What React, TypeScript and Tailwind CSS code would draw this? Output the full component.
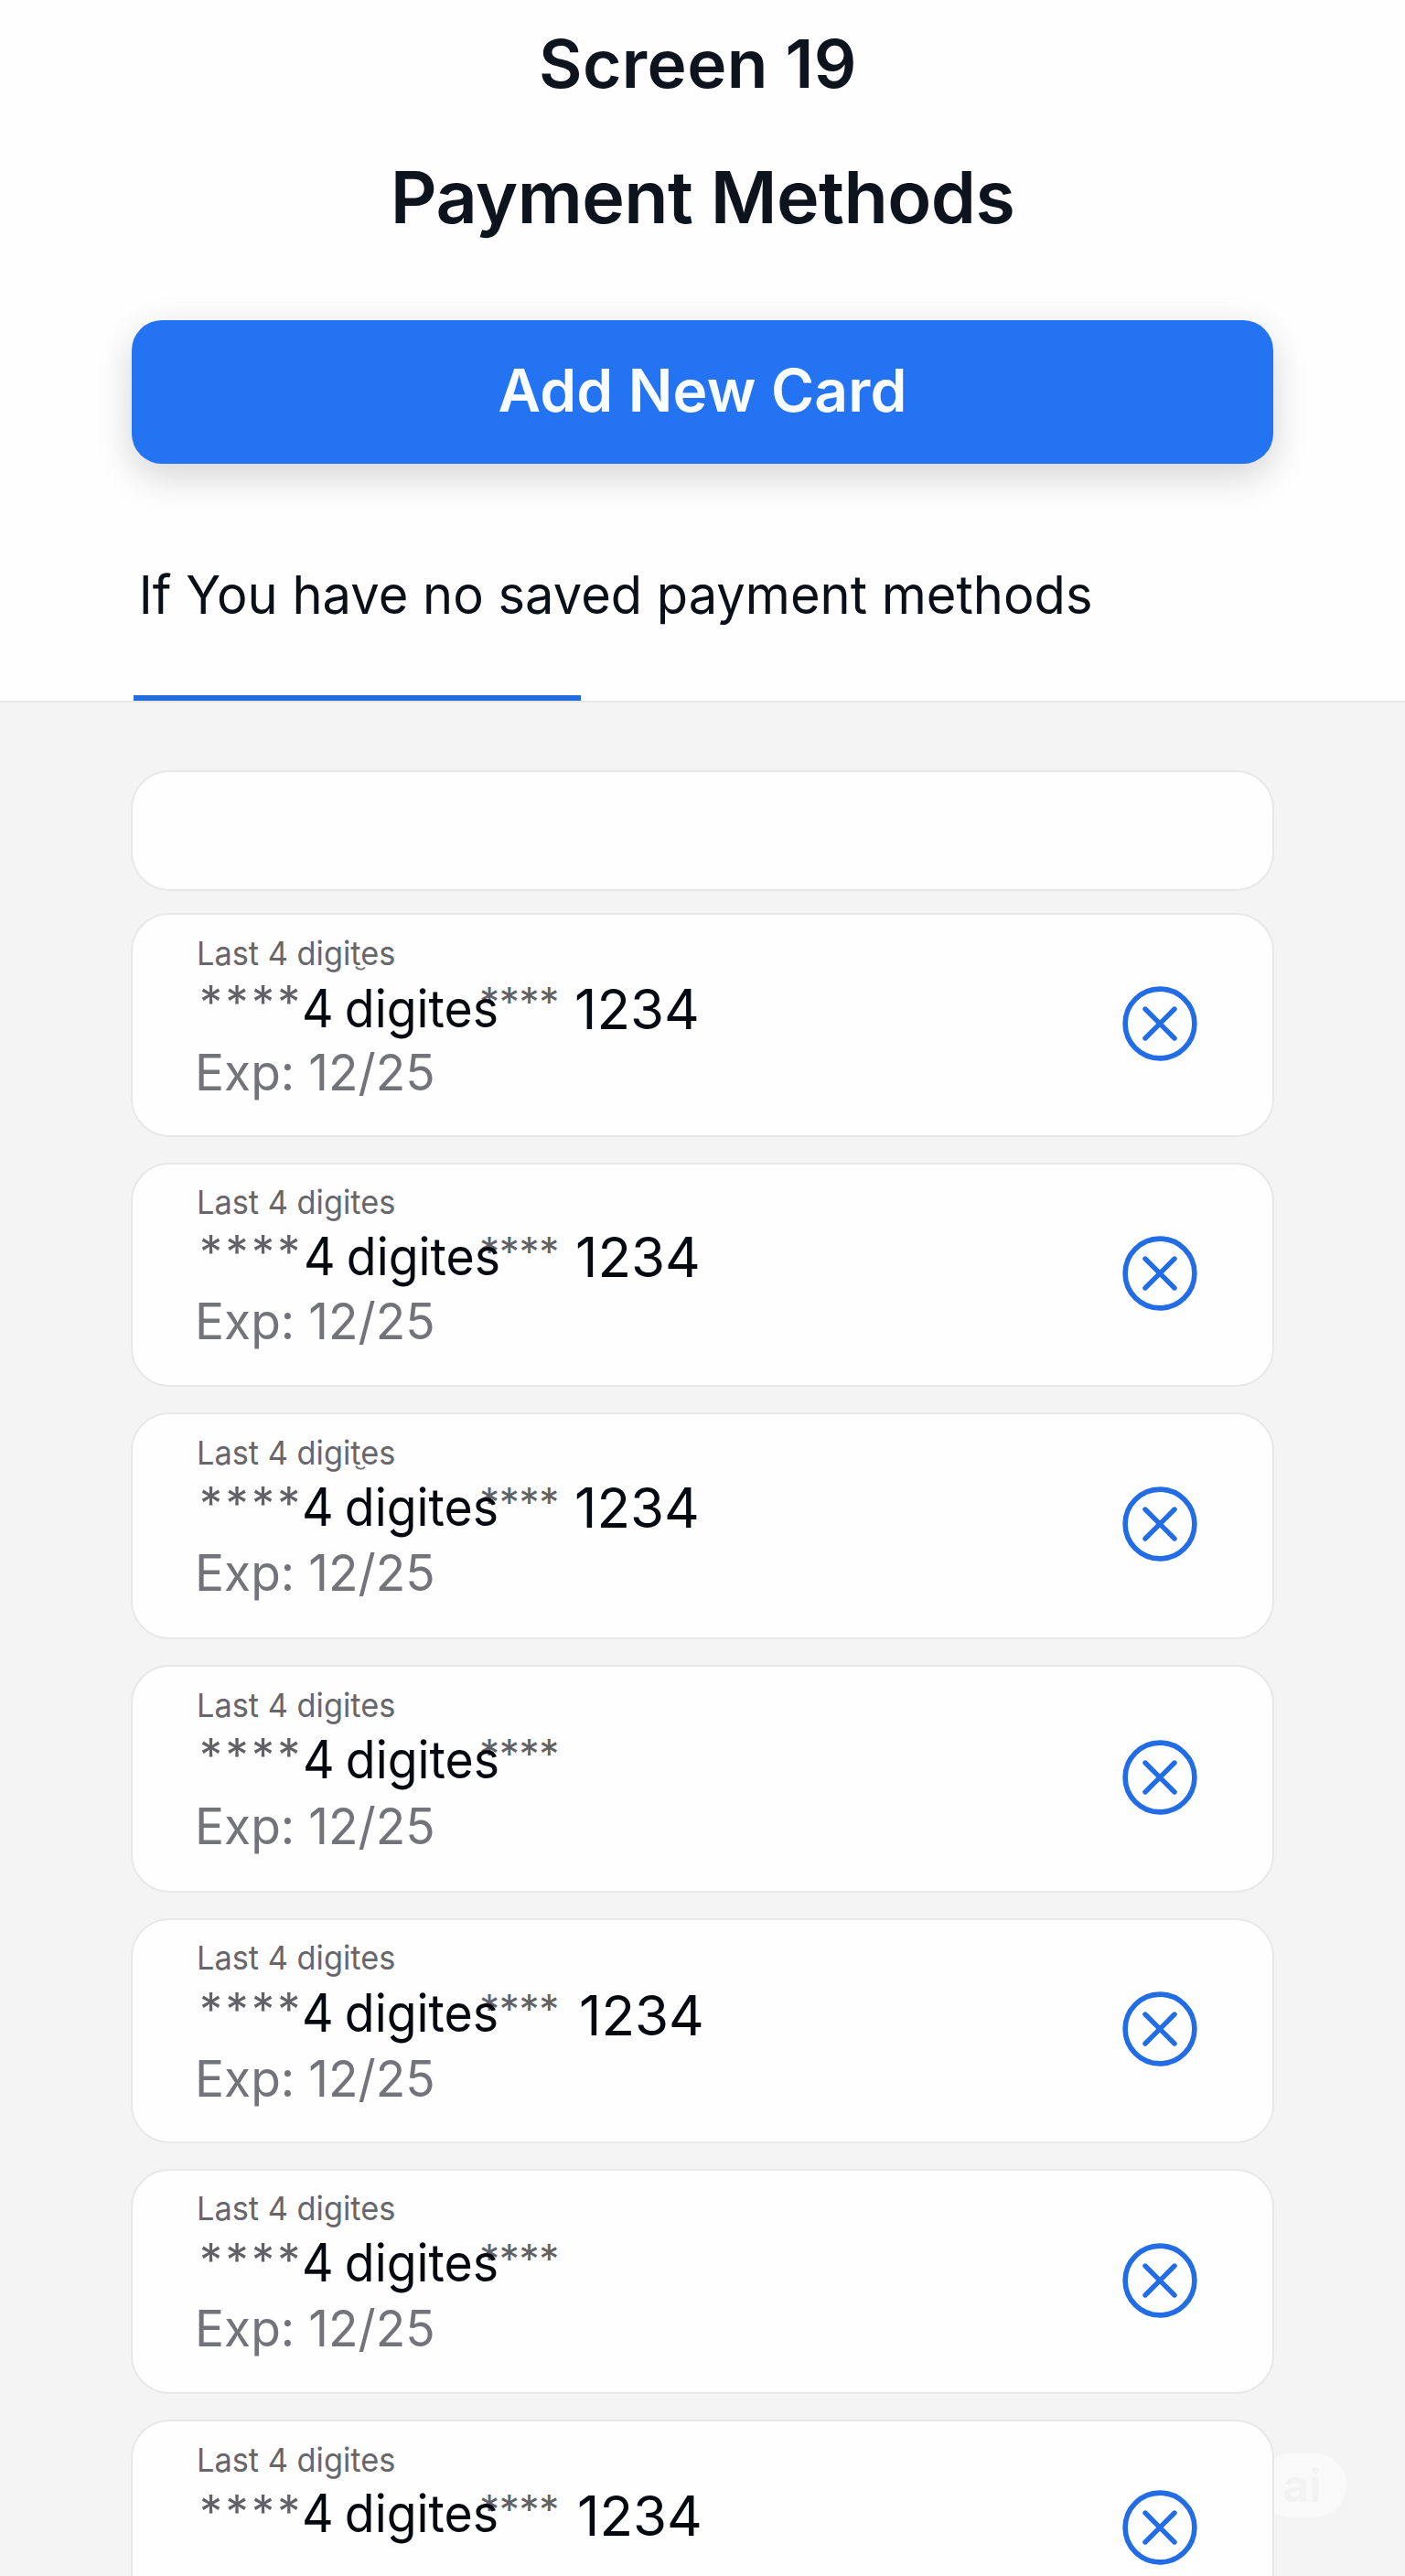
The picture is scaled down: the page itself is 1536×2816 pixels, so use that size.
type SavedCard = {
  card: string;
  label: string;
  row: string;
  mask: string;
  digits: string;
  tail: string;
  number?: string;
  expiry?: string;
  icon: string;
  mark?: boolean;
};

const CARDS: SavedCard[] = [
  { card: "h-[245px]", label: "mt-[22px]", row: "mt-[8px]", mask: "mt-[2px]", digits: "ml-[112px]", tail: "mt-[1px]", number: "mt-[9px] ml-[410px]", expiry: "mt-[20px]", icon: "mt-[78px]", mark: true },
  { card: "h-[245px]", label: "mt-[21px]", row: "mt-[7px]", mask: "mt-[4px]", digits: "ml-[114px]", tail: "mt-[3px]", number: "mt-[9px] ml-[411px]", expiry: "mt-[21px]", icon: "mt-[78px]" },
  { card: "h-[248px]", label: "mt-[22px]", row: "mt-[7px]", mask: "mt-[5px]", digits: "ml-[112px]", tail: "mt-[3px]", number: "mt-[9px] ml-[410px]", expiry: "mt-[22px]", icon: "mt-[79px]", mark: true },
  { card: "h-[249px]", label: "mt-[22px]", row: "mt-[7px]", mask: "mt-[4px]", digits: "ml-[113px]", tail: "mt-[2px]", expiry: "mt-[23px]", icon: "mt-[80px]" },
  { card: "h-[246px]", label: "mt-[21px]", row: "mt-[8px]", mask: "mt-[5px]", digits: "ml-[112px]", tail: "mt-[4px]", number: "mt-[11px] ml-[415px]", expiry: "mt-[22px]", icon: "mt-[78px]" },
  { card: "h-[246px]", label: "mt-[21px]", row: "mt-[7px]", mask: "mt-[6px]", digits: "ml-[112px]", tail: "mt-[4px]", expiry: "mt-[22px]", icon: "mt-[79px]" },
  { card: "h-[246px]", label: "mt-[22px]", row: "mt-[6px]", mask: "mt-[7px]", digits: "ml-[112px]", tail: "mt-[4px]", number: "mt-[11px] ml-[413px]", icon: "mt-[75px]" },
];

function RemoveIcon() {
  return (
    <svg viewBox="0 0 82 82" className="size-[82px]" fill="none" stroke="#226de6" strokeLinecap="round">
      <circle cx="41" cy="41" r="37.9" strokeWidth="5.6" />
      <path d="M25 25 57 57M57 25 25 57" strokeWidth="5.4" />
    </svg>
  );
}

function CardRow({ item }: { item: SavedCard }) {
  return (
    <li className={`flex shrink-0 items-start justify-between rounded-[42px] border-2 border-[#e8e8e8] bg-[#fefefe] pl-[68px] pr-[82px] ${item.card}`}>
      <div className="flex flex-col">
        <p className={`relative flex pl-[2px] text-[36px] leading-[40px] text-[#66666b] ${item.label}`}>
          <span className="origin-left scale-x-[0.954]">Last 4 digites</span>
          {item.mark && (
            <svg viewBox="0 0 12 6" className="absolute left-[175px] top-[33px] h-[6px] w-[12px]" fill="none" stroke="#77777c" strokeWidth="2">
              <path d="M1 1.5C3 5.5 9 5.5 11 2.5" />
            </svg>
          )}
        </p>
        {/* All segments share one grid cell so the masks can overlap the digits. */}
        <div className={`grid h-[58px] grid-cols-1 items-start pl-[5px] leading-[48px] ${item.row}`}>
          <span className={`col-start-1 row-start-1 mt-[9px] w-max origin-left scale-x-[0.94] whitespace-nowrap text-[57px] text-[#05080f] [word-spacing:-3px] ${item.digits}`}>4 digites</span>
          <span className={`col-start-1 row-start-1 text-[50px] tracking-[3.4px] text-[#616166] ${item.mask}`}>****</span>
          <span className={`col-start-1 row-start-1 ml-[306px] text-[44px] tracking-[-0.3px] text-[#616166] ${item.tail}`}>****</span>
          {item.number && (
            <span className={`col-start-1 row-start-1 text-[60px] text-[#05080f] ${item.number}`}>1234</span>
          )}
        </div>
        {item.expiry && (
          <p className={`origin-left scale-x-[0.97] self-start text-[55px] leading-[48px] text-[#73747a] ${item.expiry}`}>Exp: 12/25</p>
        )}
      </div>
      <button aria-label="Remove card" className={item.icon}>
        <RemoveIcon />
      </button>
    </li>
  );
}

export default function App() {
  return (
    <div className="flex h-[2816px] w-[1536px] flex-col overflow-hidden bg-[#fefefe] font-['Inter',sans-serif]">
      <header className="flex h-[768px] shrink-0 flex-col border-b-2 border-[#e6e6e6] px-[144px] pt-[30px]">
        <p className="pr-[10px] text-center text-[73px] font-semibold leading-[80px] tracking-[0.4px] text-[#0d141e]">Screen 19</p>
        <h1 className="mt-[65px] text-center text-[79px] font-semibold leading-[80px] tracking-[-0.6px] text-[#0d141e]">Payment Methods</h1>
        <button className="mt-[95px] h-[158px] w-full rounded-[33px] bg-[#2373f2] pb-[4px] text-[64px] font-semibold tracking-[0.2px] text-[#fafdff] shadow-[0_16px_40px_rgba(0,0,0,0.14),0_0_48px_rgba(0,0,0,0.03)]">
          Add New Card
        </button>
        <p className="mt-[103px] origin-left scale-x-[0.966] self-start whitespace-nowrap pl-[8px] text-[58px] leading-[80px] text-[#0a0f18]">If You have no saved payment methods</p>
        <div className="relative ml-[2px] mt-[70px] h-[6px] w-[489px] shrink-0 bg-[#236cdb]" />
      </header>
      <main className="relative z-0 flex grow flex-col bg-[#f4f4f4] px-[143px] pt-[74px]">
        <span className="absolute left-[1375px] top-[1914px] -z-10 flex h-[70px] w-[97px] items-center justify-center rounded-full bg-[#f9f9f9] pt-[1px] text-[50px] font-bold text-[#f3f3f3]">ai</span>
        <div className="h-[132px] shrink-0 rounded-[42px] border-2 border-[#e8e8e8] bg-[#fefefe]" />
        <ul className="mt-[24px] flex flex-col gap-7">
          {CARDS.map((item, i) => (
            <CardRow key={i} item={item} />
          ))}
        </ul>
      </main>
    </div>
  );
}
